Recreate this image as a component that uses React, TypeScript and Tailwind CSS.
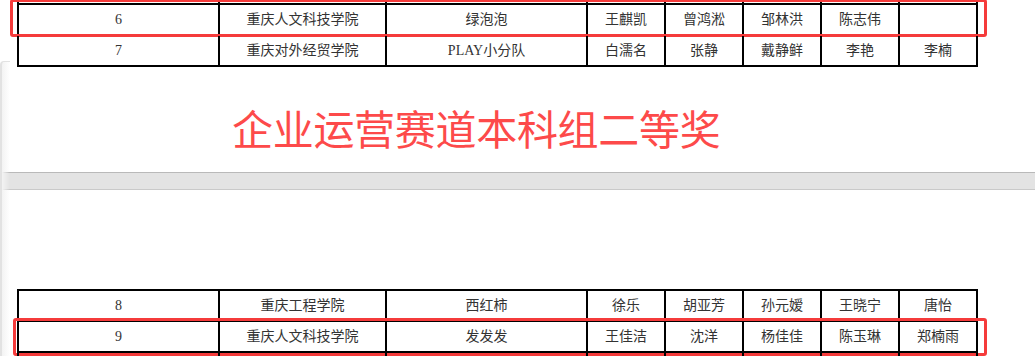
const widths = ['w-[203px] border-l-2', 'w-[167px]', 'w-[201px]', 'w-[78px]', 'w-[78px]', 'w-[78px]', 'w-[78px]', 'w-[78px]'];

type Row = { cells: string[]; mark?: 'top' | 'bottom' };

function TableRow({ cells, mark, first }: Row & { first?: boolean }) {
  return (
    <div className={`relative flex h-[31px] ${first ? '' : ''}`}>
      {widths.map((w, i) => (
        <div
          key={i}
          className={`${w} box-border flex h-full shrink-0 items-center justify-center border-r-2 border-b-2 border-black text-[14px] text-[#333]`}
        >
          {cells[i] ?? ''}
        </div>
      ))}
      {/* red highlight box drawn over the row */}
      {mark === 'top' && (
        <div className="pointer-events-none absolute -top-[6px] -bottom-[1px] -left-[7px] -right-[9px] rounded-[3px] border-[3px] border-[#f53b3b]" />
      )}
      {mark === 'bottom' && (
        <div className="pointer-events-none absolute -top-[4px] -bottom-[3px] -left-[4px] -right-[9px] rounded-[3px] border-[3px] border-[#f53b3b]" />
      )}
    </div>
  );
}

export default function App() {
  const font = { fontFamily: '"Liberation Serif", "Noto Sans CJK SC", serif' };

  return (
    <div className="relative h-[356px] w-[1035px] overflow-hidden bg-white" style={font}>
      {/* page 1 */}
      <section className="h-[172px] overflow-hidden">
        <div className="-mt-[26px] ml-[17px] w-[961px]">
          <div className="flex h-[31px]">
            {widths.map((w, i) => (
              <div key={i} className={`${w} box-border h-full shrink-0 border-r-2 border-b-2 border-black`} />
            ))}
          </div>
          <TableRow cells={['6', '重庆人文科技学院', '绿泡泡', '王麒凯', '曾鸿淞', '邹林洪', '陈志伟', '']} mark="top" />
          <TableRow cells={['7', '重庆对外经贸学院', 'PLAY小分队', '白濡名', '张静', '戴静鲜', '李艳', '李楠']} />
        </div>
        <h1
          className="mt-[40px] ml-[232px] text-[41px] leading-[41px] font-normal tracking-[-0.3px] text-[#fd4a4a]"
          style={{ fontFamily: '"Noto Sans CJK SC", sans-serif' }}
        >
          企业运营赛道本科组二等奖
        </h1>
      </section>

      {/* page gap */}
      <div className="ml-[2px] h-[18px] border-t border-b border-t-[#b9b9b9] border-b-[#c9c9c9] bg-[#e3e3e3]" />

      {/* page 2 */}
      <section className="pt-[99px]">
        <div className="ml-[17px] w-[961px] border-t-2 border-black">
          <TableRow cells={['8', '重庆工程学院', '西红柿', '徐乐', '胡亚芳', '孙元嫒', '王晓宁', '唐怡']} />
          <TableRow cells={['9', '重庆人文科技学院', '发发发', '王佳洁', '沈洋', '杨佳佳', '陈玉琳', '郑楠雨']} mark="bottom" />
          <TableRow cells={[]} />
        </div>
      </section>

      {/* left edge of the document panel */}
      <div className="pointer-events-none absolute top-[61px] bottom-0 left-0 w-[10px] rounded-tl-[4px] border-l-2 border-t border-[#e2e2e2] bg-gradient-to-r from-[#f3f3f3] to-transparent" />
    </div>
  );
}
